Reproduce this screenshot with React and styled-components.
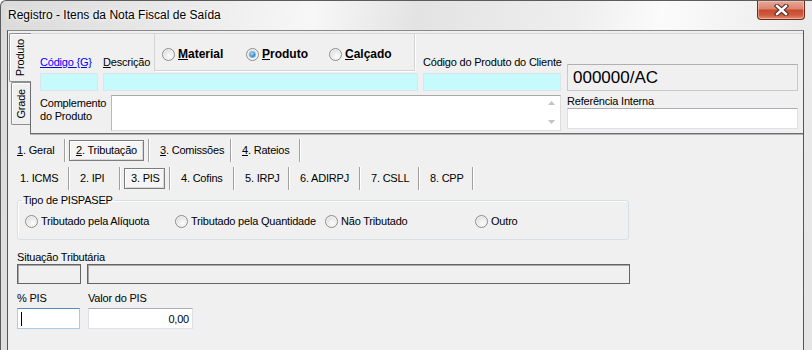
import styled, { createGlobalStyle } from "styled-components";

const GlobalStyle = createGlobalStyle`
  html, body {
    margin: 0;
    padding: 0;
    background: #ffffff;
  }
  body {
    font-family: "Liberation Sans", Arial, sans-serif;
    font-size: 11px;
    letter-spacing: -0.2px;
    color: #000;
  }
`;

const Window = styled.div`
  width: 812px;
  height: 350px;
  box-sizing: border-box;
  overflow: hidden;
  display: flex;
  flex-direction: column;
  border-left: 1px solid #5c5c5c;
  border-top: 1px solid #5c5c5c;
  border-top-left-radius: 6px;
  background: linear-gradient(
    100deg,
    #dadada 0%,
    #ebebeb 22%,
    #f7f7f7 36%,
    #e3e3e3 48%,
    #eeeeee 66%,
    #fbfbfb 76%,
    #e4e4e4 100%
  );
`;

const TitleBar = styled.div`
  height: 29px;
  display: flex;
  align-items: flex-start;
  padding: 0 7px 0 7px;
`;

const Title = styled.div`
  font-size: 12px;
  letter-spacing: 0;
  line-height: 14px;
  margin-top: 7px;
  color: #000;
  text-shadow: 0 0 6px #fff, 0 0 3px #fff;
`;

const CloseButton = styled.div`
  margin-left: auto;
  width: 48px;
  height: 19px;
  box-sizing: border-box;
  border: 1px solid #6e2a20;
  border-top: none;
  border-radius: 0 0 4px 4px;
  background: linear-gradient(
    #eaa696 0%,
    #dc8670 42%,
    #c84a32 52%,
    #cf5a3e 78%,
    #e4906c 100%
  );
  box-shadow: inset 0 0 0 1px rgba(255, 220, 210, 0.45);
  display: flex;
  align-items: center;
  justify-content: center;
`;

const Body = styled.div`
  flex: 1;
  display: flex;
  padding: 0 8px 0 6px;
`;

const Client = styled.div`
  flex: 1;
  display: flex;
  flex-direction: column;
  background: #f0f0f0;
  border: 1px solid #555;
  border-bottom: none;
  border-top-color: #8a8a8a;
`;

const TopSection = styled.div`
  display: flex;
  padding: 2px 0 0 1px;
`;

const VTabs = styled.div`
  width: 21px;
  display: flex;
  flex-direction: column;
  align-items: flex-end;
`;

const VTab = styled.div`
  box-sizing: border-box;
  width: ${(p) => (p.$active ? 22 : 19)}px;
  height: ${(p) => (p.$active ? 49 : 43)}px;
  margin-right: ${(p) => (p.$active ? -1 : 0)}px;
  position: relative;
  z-index: ${(p) => (p.$active ? 1 : 0)};
  display: flex;
  align-items: center;
  justify-content: center;
  background: #f0f0f0;
  border: 1px solid #8c8f96;
  border-right: none;
  border-radius: 2px 0 0 2px;
  box-shadow: inset 1px 1px 0 #ffffff;

  span {
    writing-mode: vertical-rl;
    transform: rotate(180deg);
    line-height: 13px;
  }
`;

const ProductPanel = styled.div`
  flex: 1;
  box-sizing: border-box;
  height: 101px;
  border-top: 1px solid #d6d6d6;
  border-left: 1px solid #6d6d6d;
  border-bottom: 1px solid #6d6d6d;
  box-shadow: 0 1px 0 #b4b4b4;
  display: grid;
  grid-template-columns: 58px 315px 138px 232px;
  grid-template-rows: 38px 18px 1fr;
  column-gap: 5px;
  row-gap: 1px;
  padding-left: 9px;
`;

const Label = styled.div`
  line-height: 13px;
  white-space: nowrap;
  align-self: end;
  padding-bottom: 3px;
`;

const LinkLabel = styled(Label)`
  color: #0000ff;
  text-decoration: underline;
`;

const DescCell = styled.div`
  display: flex;
  align-items: flex-end;
`;

const KindGroup = styled.div`
  box-sizing: border-box;
  margin-left: auto;
  margin-right: 3px;
  margin-top: -1px;
  width: 261px;
  height: 38px;
  align-self: flex-start;
  border: 1px solid #d3d3d3;
  border-top: none;
  box-shadow: 1px 1px 0 #ffffff;
  display: grid;
  grid-template-columns: 84px 83px 84px;
  align-items: center;
  padding: 6px 0 0 7px;
`;

const RadioItem = styled.div`
  display: flex;
  align-items: center;
  gap: 3px;
  font-size: ${(p) => (p.$bold ? 12 : 11)}px;
  font-weight: ${(p) => (p.$bold ? 700 : 400)};
  letter-spacing: ${(p) => (p.$bold ? 0 : -0.2)}px;
  line-height: 13px;
  white-space: nowrap;
`;

const RadioDot = styled.span`
  box-sizing: border-box;
  flex: none;
  width: 13px;
  height: 13px;
  border-radius: 50%;
  border: 1px solid #8d8d8d;
  background: radial-gradient(circle at 60% 65%, #fdfdfd 0%, #ececec 40%, #cfcfcf 100%);
  box-shadow: inset 0 0 0 1px #f6f6f6;
  display: inline-flex;
  align-items: center;
  justify-content: center;

  &::after {
    content: "";
    display: ${(p) => (p.$checked ? "block" : "none")};
    width: 5px;
    height: 5px;
    border-radius: 50%;
    background: radial-gradient(circle at 40% 35%, #b7e3ff 0%, #3a8fd6 55%, #114f8c 100%);
    box-shadow: 0 0 0 1px #7fb2dc;
  }
`;

const TextBox = styled.div`
  box-sizing: border-box;
  height: ${(p) => p.$h || 18}px;
  background: ${(p) => (p.$cyan ? "#c6fafc" : "#ffffff")};
  border: 1px solid ${(p) => (p.$cyan ? "#d9e6ea" : "#dde1e6")};
  border-top-color: ${(p) => (p.$cyan ? "#d9e6ea" : "#abadb3")};
`;

const CodeBox = styled.div`
  grid-column: 4;
  grid-row: 1 / 3;
  align-self: end;
  box-sizing: border-box;
  height: 27px;
  margin-left: 1px;
  border: 1px solid #cacaca;
  border-top-color: #b0b0b0;
  padding-left: 5px;
  font-size: 17px;
  letter-spacing: 0;
  line-height: 25px;
`;

const ComplementRow = styled.div`
  grid-column: 1 / 4;
  display: flex;
  align-items: flex-start;
`;

const ComplementLabel = styled.div`
  width: 71px;
  flex: none;
  padding-top: 5px;
  line-height: 13px;
`;

const Memo = styled.div`
  flex: 1;
  box-sizing: border-box;
  height: 36px;
  margin-top: 3px;
  background: #fff;
  border: 1px solid #dcdcdc;
  border-top-color: #a8a8a8;
  border-left-color: #b8b8b8;
  display: flex;
  justify-content: flex-end;
`;

const MemoScroll = styled.div`
  width: 17px;
  display: flex;
  flex-direction: column;
  justify-content: space-between;
  align-items: center;
  padding: 5px 0 6px;
`;

const RefCell = styled.div`
  grid-column: 4;
  grid-row: 3;
  display: flex;
  flex-direction: column;
  padding: 3px 0 0 1px;
`;

const TabBar = styled.div`
  display: flex;
  align-items: center;
  height: 24px;
  margin-top: ${(p) => p.$top}px;
  padding-left: ${(p) => p.$pad}px;
`;

const TabItem = styled.div`
  box-sizing: border-box;
  width: ${(p) => p.$w}px;
  height: 21px;
  padding-left: 6px;
  display: flex;
  align-items: center;
  white-space: nowrap;
  border: 1px solid ${(p) => (p.$active ? "#7c7c7c" : "transparent")};
  background: ${(p) => (p.$active ? "#f5f5f5" : "transparent")};
  box-shadow: ${(p) => (p.$active ? "inset 1px 1px 0 #ffffff, inset -1px -1px 0 #d8d8d8" : "none")};
`;

const TabSep = styled.div`
  width: 1px;
  height: 23px;
  margin: 0 4px;
  background: #a0a0a0;
  box-shadow: 1px 0 0 #ffffff;
`;

const PisBody = styled.div`
  display: flex;
  flex-direction: column;
  align-items: flex-start;
  padding-left: 9px;
  margin-top: 4px;
`;

const GroupBox = styled.fieldset`
  box-sizing: border-box;
  width: 612px;
  margin: 0;
  padding: 8px 0 11px 7px;
  border: 1px solid #d5dfe5;
  border-radius: 3px;
  box-shadow: inset 1px 1px 0 #ffffff;

  legend {
    padding: 0 1px;
    margin-left: -3px;
    line-height: 13px;
  }
`;

const RadioGrid = styled.div`
  display: grid;
  grid-template-columns: repeat(4, 150px);
`;

const FieldLabel = styled.div`
  line-height: 13px;
  margin-top: ${(p) => p.$top || 0}px;
`;

const FieldRow = styled.div`
  display: flex;
  gap: ${(p) => p.$gap}px;
`;

const Field = styled.div`
  display: flex;
  flex-direction: column;
`;

const SunkenBox = styled.div`
  box-sizing: border-box;
  width: ${(p) => p.$w}px;
  height: 20px;
  border: 1px solid #646464;
  box-shadow: inset 1px 1px 0 #a8a8a8;
`;

const Edit = styled.div`
  box-sizing: border-box;
  width: ${(p) => p.$w}px;
  height: 21px;
  margin-top: 3px;
  background: #fff;
  border: 1px solid ${(p) => (p.$focus ? "#a9cbe6" : "#dde1e6")};
  border-top-color: ${(p) => (p.$focus ? "#4f8cc4" : "#abadb3")};
  display: flex;
  align-items: center;
  justify-content: ${(p) => (p.$right ? "flex-end" : "flex-start")};
  padding: 0 3px;
`;

const Caret = styled.span`
  width: 1px;
  height: 14px;
  background: #000;
`;

const Arrow = ({ up }) => (
  <svg width="7" height="4" viewBox="0 0 7 4">
    <path d={up ? "M0 4 L3.5 0 L7 4 Z" : "M0 0 L3.5 4 L7 0 Z"} fill="#c2c2c2" />
  </svg>
);

const Radio = ({ checked, bold, children }) => (
  <RadioItem $bold={bold}>
    <RadioDot $checked={checked} />
    <span>{children}</span>
  </RadioItem>
);

const mainTabs = [
  { key: "1", rest: ". Geral", w: 50 },
  { key: "2", rest: ". Tributação", w: 75, active: true },
  { key: "3", rest: ". Comissões", w: 73 },
  { key: "4", rest: ". Rateios", w: 60 },
];

const taxTabs = [
  { label: "1. ICMS", w: 51 },
  { label: "2. IPI", w: 42 },
  { label: "3. PIS", w: 41, active: true },
  { label: "4. Cofins", w: 55 },
  { label: "5. IRPJ", w: 46 },
  { label: "6. ADIRPJ", w: 62 },
  { label: "7. CSLL", w: 50 },
  { label: "8. CPP", w: 45 },
];

export default function App() {
  return (
    <>
      <GlobalStyle />
      <Window>
        <TitleBar>
          <Title>Registro - Itens da Nota Fiscal de Saída</Title>
          <CloseButton>
            <svg width="15" height="12" viewBox="0 0 15 12">
              <path
                d="M3 2 L12 10 M12 2 L3 10"
                stroke="#4a2a24"
                strokeWidth="4.4"
                strokeLinecap="square"
              />
              <path
                d="M3 2 L12 10 M12 2 L3 10"
                stroke="#ffffff"
                strokeWidth="2.4"
                strokeLinecap="square"
              />
            </svg>
          </CloseButton>
        </TitleBar>
        <Body>
          <Client>
            <TopSection>
              <VTabs>
                <VTab $active>
                  <span>Produto</span>
                </VTab>
                <VTab>
                  <span>Grade</span>
                </VTab>
              </VTabs>
              <ProductPanel>
                <LinkLabel>Código {"{G}"}</LinkLabel>
                <DescCell>
                  <Label>
                    <u>D</u>escrição
                  </Label>
                  <KindGroup>
                    <Radio bold>
                      <u>M</u>aterial
                    </Radio>
                    <Radio bold checked>
                      <u>P</u>roduto
                    </Radio>
                    <Radio bold>
                      <u>C</u>alçado
                    </Radio>
                  </KindGroup>
                </DescCell>
                <Label>Código do Produto do Cliente</Label>
                <CodeBox>000000/AC</CodeBox>
                <TextBox $cyan />
                <TextBox $cyan />
                <TextBox $cyan />
                <ComplementRow>
                  <ComplementLabel>
                    Complemento
                    <br />
                    do Produto
                  </ComplementLabel>
                  <Memo>
                    <MemoScroll>
                      <Arrow up />
                      <Arrow />
                    </MemoScroll>
                  </Memo>
                </ComplementRow>
                <RefCell>
                  <FieldLabel>Referência Interna</FieldLabel>
                  <TextBox $h={21} />
                </RefCell>
              </ProductPanel>
            </TopSection>

            <TabBar $top={4} $pad={2}>
              {mainTabs.map((t) => [
                <TabItem key={t.key} $w={t.w} $active={t.active}>
                  <span>
                    <u>{t.key}</u>
                    {t.rest}
                  </span>
                </TabItem>,
                <TabSep key={t.key + "s"} />,
              ])}
            </TabBar>

            <TabBar $top={4} $pad={5}>
              {taxTabs.map((t) => [
                <TabItem key={t.label} $w={t.w} $active={t.active}>
                  {t.label}
                </TabItem>,
                <TabSep key={t.label + "s"} />,
              ])}
            </TabBar>

            <PisBody>
              <GroupBox>
                <legend>Tipo de PISPASEP</legend>
                <RadioGrid>
                  <Radio>Tributado pela Alíquota</Radio>
                  <Radio>Tributado pela Quantidade</Radio>
                  <Radio>Não Tributado</Radio>
                  <Radio>Outro</Radio>
                </RadioGrid>
              </GroupBox>

              <FieldLabel $top={11}>Situação Tributária</FieldLabel>
              <FieldRow $gap={6}>
                <SunkenBox $w={64} />
                <SunkenBox $w={543} />
              </FieldRow>

              <FieldRow $gap={8}>
                <Field>
                  <FieldLabel $top={8}>% PIS</FieldLabel>
                  <Edit $w={63} $focus>
                    <Caret />
                  </Edit>
                </Field>
                <Field>
                  <FieldLabel $top={8}>Valor do PIS</FieldLabel>
                  <Edit $w={105} $right>
                    0,00
                  </Edit>
                </Field>
              </FieldRow>
            </PisBody>
          </Client>
        </Body>
      </Window>
    </>
  );
}
